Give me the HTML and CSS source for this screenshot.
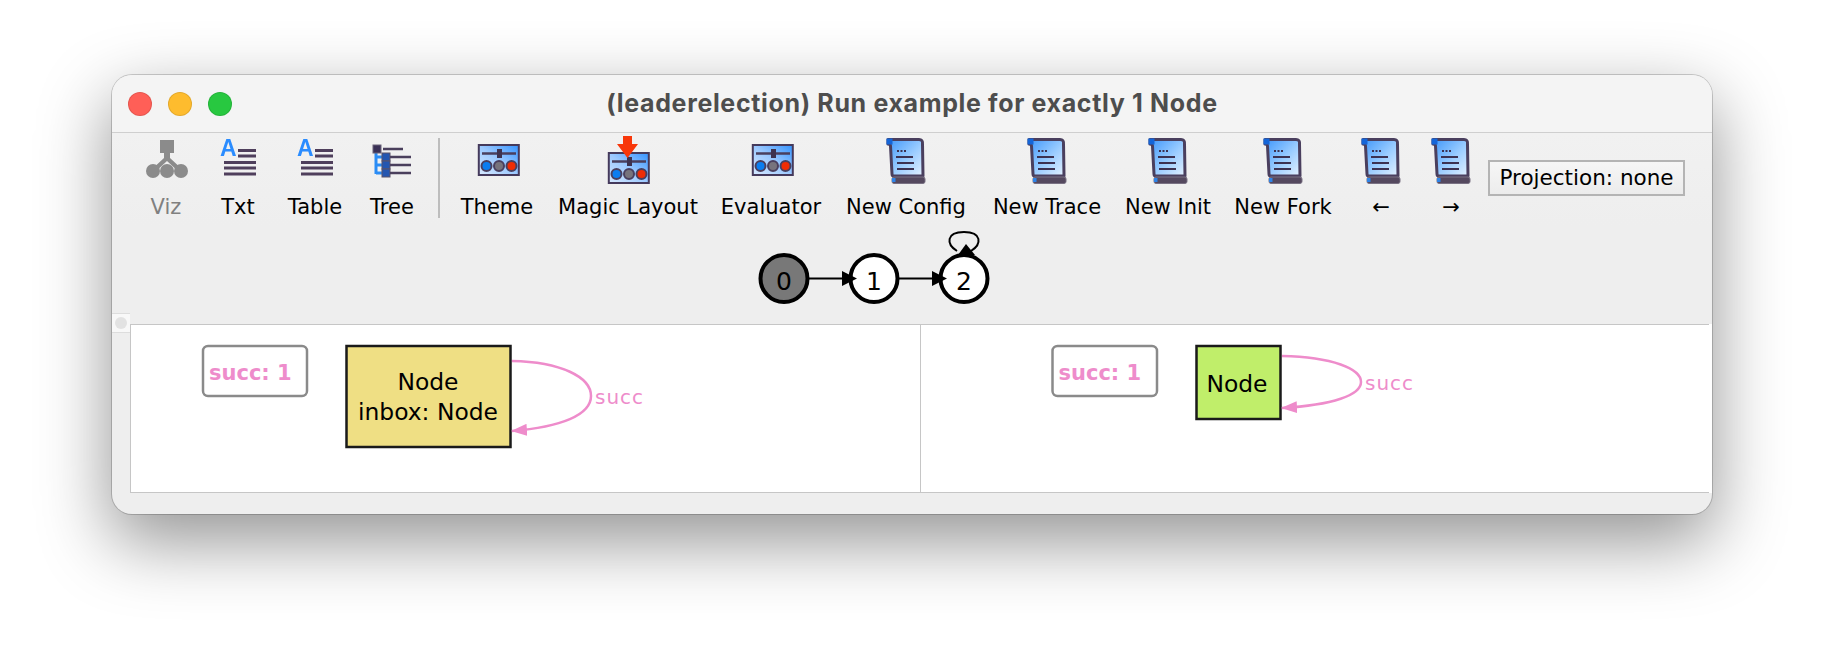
FILE: index.html
```html
<!DOCTYPE html>
<html lang="en">
<head>
<meta charset="utf-8">
<title>Run example</title>
<link rel="stylesheet" href="styles.css">
</head>
<body>
<svg class="defs" width="0" height="0" aria-hidden="true">
  <defs>
    <linearGradient id="sg" x1="0" y1="0" x2="1" y2="1"><stop offset="0" stop-color="#3f97fb"/><stop offset=".55" stop-color="#9ccdff"/><stop offset="1" stop-color="#e4f1ff"/></linearGradient>
    <linearGradient id="tg" x1="0" y1="1" x2="1" y2="0"><stop offset="0" stop-color="#d8e9ff"/><stop offset=".5" stop-color="#9cc9ff"/><stop offset="1" stop-color="#3393ff"/></linearGradient>
    <symbol id="scroll" viewBox="0 0 42 50">
      <path d="M3 3.500H34Q38 3.500 37.500 8L38 40H9Q7 40 7 38L5.500 10Q5.500 8 3 8Z" fill="url(#sg)" stroke="#4a3f5e" stroke-width="3" stroke-linejoin="round"/>
      <rect x="1.500" y="2.500" width="6" height="6" fill="#1465d8"/>
      <path d="M12 15h2M15.500 15h2M19 15h2" stroke="#3c3252" stroke-width="2"/>
      <path d="M11 21H28M12 27H29M12 33H29" stroke="#3c3252" stroke-width="2.200"/>
      <rect x="7" y="41" width="33" height="6.500" rx="2" fill="#55495f" stroke="#7a7284" stroke-width="1"/>
      <rect x="7" y="42" width="3.500" height="4" fill="#2f84e8"/>
    </symbol>
    <symbol id="slider" viewBox="0 0 44 32">
      <rect x="2.800" y="1" width="40" height="30" fill="url(#tg)" stroke="#453a5c" stroke-width="2"/>
      <path d="M6 9.500H40" stroke="#4a3f5e" stroke-width="2.400"/>
      <rect x="21" y="5" width="5" height="9" fill="#3e3350"/>
      <circle cx="10.500" cy="22" r="5" fill="#0b7df0" stroke="#4a3f5e" stroke-width="2"/>
      <circle cx="23" cy="22" r="5" fill="#77737c" stroke="#4a3f5e" stroke-width="2"/>
      <circle cx="35.500" cy="22" r="5" fill="#ef2d05" stroke="#4a3f5e" stroke-width="2"/>
    </symbol>
    <symbol id="textlines" viewBox="0 0 40 50">
      <text class="icon-a" x="2" y="20">A</text>
      <path d="M20 14.500H38M20 20H38M6 26.500H38M6 32H38M6 38H38" stroke="#4f3f5c" stroke-width="3"/>
    </symbol>
  </defs>
</svg>

<main class="window">
  <header class="titlebar">
    <div class="lights">
      <span class="light light-red"></span>
      <span class="light light-yellow"></span>
      <span class="light light-green"></span>
    </div>
    <h1 class="title">(leaderelection) Run example for exactly 1 Node</h1>
  </header>

  <nav class="toolbar">
    <div class="tool">
      <svg class="icon" width="46" height="50" viewBox="0 0 46 50">
        <g fill="#8b8b8b"><rect x="17" y="4" width="14" height="13"/><path d="M21 16h6v6l14 13-3 3-14-13-14 13-3-3 14-13z"/><circle cx="10" cy="35" r="7"/><circle cx="24" cy="35" r="7"/><circle cx="38" cy="35" r="7"/></g>
      </svg>
      <span class="tool-label tool-label-off">Viz</span>
    </div>
    <div class="tool">
      <svg class="icon" width="40" height="50"><use href="#textlines" width="40" height="50"/></svg>
      <span class="tool-label">Txt</span>
    </div>
    <div class="tool">
      <svg class="icon" width="40" height="50"><use href="#textlines" width="40" height="50"/></svg>
      <span class="tool-label">Table</span>
    </div>
    <div class="tool">
      <svg class="icon" width="42" height="50" viewBox="0 0 42 50">
        <path d="M5 16V38M5 21H12M5 29H12M5 37H12" stroke="#2a8cf5" stroke-width="3" fill="none"/>
        <rect x="2" y="9" width="8" height="8" fill="#3a3056" stroke="#6a6278"/>
        <rect x="11" y="17" width="8" height="8" fill="#2456b0" stroke="#5a5268"/>
        <rect x="11" y="25" width="8" height="8" fill="#2456b0" stroke="#5a5268"/>
        <rect x="11" y="33" width="8" height="8" fill="#2456b0" stroke="#5a5268"/>
        <path d="M12 13H32M19 21H40M19 29H40M19 37H40" stroke="#4a3f5c" stroke-width="2.500"/>
      </svg>
      <span class="tool-label">Tree</span>
    </div>
    <div class="separator"></div>
    <div class="tool">
      <svg class="icon" width="44" height="50"><use href="#slider" x="1" y="8" width="44" height="32"/></svg>
      <span class="tool-label">Theme</span>
    </div>
    <div class="tool">
      <svg class="icon" width="44" height="50" viewBox="0 0 44 50">
        <use href="#slider" y="16" width="44" height="32"/>
        <path d="M17 0h9v8h6L21.500 22 11 8h6z" fill="#f8370a"/>
      </svg>
      <span class="tool-label">Magic Layout</span>
    </div>
    <div class="tool">
      <svg class="icon" width="44" height="50"><use href="#slider" x="1" y="8" width="44" height="32"/></svg>
      <span class="tool-label">Evaluator</span>
    </div>
    <div class="tool">
      <svg class="icon" width="42" height="50"><use href="#scroll" width="42" height="50"/></svg>
      <span class="tool-label">New Config</span>
    </div>
    <div class="tool">
      <svg class="icon" width="42" height="50"><use href="#scroll" width="42" height="50"/></svg>
      <span class="tool-label">New Trace</span>
    </div>
    <div class="tool">
      <svg class="icon" width="42" height="50"><use href="#scroll" width="42" height="50"/></svg>
      <span class="tool-label">New Init</span>
    </div>
    <div class="tool">
      <svg class="icon" width="42" height="50"><use href="#scroll" width="42" height="50"/></svg>
      <span class="tool-label">New Fork</span>
    </div>
    <div class="tool">
      <svg class="icon" width="42" height="50"><use href="#scroll" width="42" height="50"/></svg>
      <span class="tool-label">←</span>
    </div>
    <div class="tool">
      <svg class="icon" width="42" height="50"><use href="#scroll" width="42" height="50"/></svg>
      <span class="tool-label">→</span>
    </div>
    <div class="projection">Projection: none</div>
  </nav>

  <svg class="trace" width="240" height="84" viewBox="0 0 240 84">
    <circle class="state state-current" cx="28" cy="54.500" r="23.500"/>
    <circle class="state" cx="118" cy="54.500" r="23.500"/>
    <circle class="state" cx="208" cy="54.500" r="23.500"/>
    <path d="M52 54.500H88M142 54.500H178" stroke="#000" stroke-width="2"/>
    <path d="M86 47L101 54.500L86 62ZM176 47L191 54.500L176 62Z" fill="#000"/>
    <path d="M201 27C190 20 190 8 208 8C226 8 226 20 215 27" fill="none" stroke="#000" stroke-width="2"/>
    <path d="M210 20L219 31H202Z" fill="#000"/>
    <text class="state-num" x="28" y="66">0</text>
    <text class="state-num" x="118" y="66">1</text>
    <text class="state-num" x="208" y="66">2</text>
  </svg>

  <section class="split">
    <span class="knob"></span>
    <div class="pane pane-left">
      <svg class="graph" width="788" height="166" viewBox="0 0 788 166">
        <defs>
          <marker id="pk" markerWidth="16" markerHeight="12" refX="15" refY="6" orient="auto" markerUnits="userSpaceOnUse"><path d="M0 6L16 0V12Z" transform="rotate(180 8 6)" fill="#ee8ccb"/></marker>
        </defs>
        <rect class="badge" x="72" y="21" width="104" height="50" rx="5"/>
        <text class="badge-text" x="78" y="55">succ: 1</text>
        <rect class="node node-yellow" x="215.500" y="21" width="164" height="101"/>
        <text class="node-text" x="297" y="65">Node</text>
        <text class="node-text" x="297" y="95">inbox: Node</text>
        <path class="edge" d="M381 36C430 37 460 52 460 71C460 90 430 102 381 106" marker-end="url(#pk)"/>
        <text class="edge-text" x="464" y="79">succ</text>
      </svg>
    </div>
    <div class="pane pane-right">
      <svg class="graph" width="780" height="166" viewBox="0 0 780 166">
        <rect class="badge" x="131.500" y="21" width="104.500" height="50" rx="5"/>
        <text class="badge-text" x="137.500" y="55">succ: 1</text>
        <rect class="node node-green" x="275.500" y="21" width="84" height="73"/>
        <text class="node-text" x="316" y="67">Node</text>
        <path class="edge" d="M361 31C412 32 440 44 440 57C440 70 412 80 361 83" marker-end="url(#pk)"/>
        <text class="edge-text" x="444" y="65">succ</text>
      </svg>
    </div>
  </section>
</main>
</body>
</html>
```

FILE: styles.css
```css
* { box-sizing: border-box; }

html, body {
  margin: 0;
  height: 100%;
  background: #fff;
  overflow: hidden;
}

body {
  padding: 75px 112px 0;
  font-family: "DejaVu Sans", sans-serif;
}

.defs { display: block; height: 0; }

.window {
  width: 1600px;
  height: 439px;
  display: flex;
  flex-direction: column;
  background: #eee;
  border-radius: 20px;
  overflow: hidden;
  box-shadow: 0 0 0 1px rgba(0,0,0,.18), 0 26px 70px 2px rgba(0,0,0,.42);
  position: relative;
}

.titlebar {
  height: 58px;
  flex: none;
  display: flex;
  align-items: center;
  justify-content: center;
  background: #f4f4f4;
  border-bottom: 1px solid #cfcfcf;
  position: relative;
}

.lights {
  position: absolute;
  left: 16px;
  top: 17px;
  display: flex;
  gap: 16px;
}

.light {
  width: 24px;
  height: 24px;
  border-radius: 50%;
  border: 1px solid rgba(0,0,0,.1);
}
.light-red { background: #ff5f57; }
.light-yellow { background: #febc2e; }
.light-green { background: #28c840; }

.title {
  margin: 0;
  font: 700 25px/1 Inter, sans-serif;
  letter-spacing: .65px;
  color: #4d4d4d;
}

.toolbar {
  height: 93px;
  flex: none;
  padding: 3px 0 0 18px;
  display: grid;
  grid-template-columns: 72px 72px 82px 72px 22px 94px 168px 118px 152px 130px 112px 118px 78px 62px 203px;
  align-items: start;
  background: linear-gradient(#f1f1f1, #eee);
}

.tool {
  display: flex;
  flex-direction: column;
  align-items: center;
}

.icon {
  display: block;
  overflow: visible;
  filter: blur(.4px);
}

.icon-a {
  font: 700 23px "Liberation Sans", sans-serif;
  fill: #2a8cff;
}

.tool-label {
  margin-top: 9px;
  font-size: 21px;
  line-height: 24px;
  color: #000;
  white-space: nowrap;
}
.tool-label-off { color: #808080; }

.separator {
  width: 2px;
  height: 80px;
  margin: 2px 0 0 10px;
  background: #bdbdbd;
}

.projection {
  margin: 24px 0 0 6px;
  width: 197px;
  height: 36px;
  border: 2px solid #b4b4b4;
  background: linear-gradient(#f6f6f6, #ececec);
  font-size: 21.500px;
  line-height: 32px;
  text-align: center;
  white-space: nowrap;
}

.trace {
  display: block;
  flex: none;
  margin: -2px 0 0 644px;
}

.state { fill: #fff; stroke: #000; stroke-width: 4; }
.state-current { fill: #787878; }
.state-num {
  font-size: 25px;
  text-anchor: middle;
  fill: #000;
}

.split {
  flex: none;
  height: 169px;
  margin: 16px 0 0 18px;
  display: flex;
  position: relative;
  background: #fff;
}

.knob {
  position: absolute;
  left: -18px;
  top: -11px;
  width: 18px;
  height: 20px;
  background: #f8f8f8;
  border-top: 1px solid #ddd;
  border-bottom: 1px solid #ddd;
}
.knob::after {
  content: "";
  position: absolute;
  left: 3px;
  top: 3px;
  width: 12px;
  height: 12px;
  border-radius: 50%;
  background: #e2e2e2;
}

.pane {
  height: 100%;
  background: #fff;
  border-top: 1px solid #c6c6c6;
  border-bottom: 1px solid #c6c6c6;
}
.pane-left {
  width: 791px;
  flex: none;
  border-left: 1px solid #c6c6c6;
  border-right: 1px solid #c6c6c6;
}
.pane-right { flex: 1; margin-right: 3px; }

.graph { display: block; }

.badge { fill: #fff; stroke: #8a8a8a; stroke-width: 2.500; }
.badge-text {
  font-size: 21px;
  font-weight: 700;
  fill: #ee8ccb;
}
.node { stroke: #1a1a1a; stroke-width: 2.500; }
.node-yellow { fill: #efdf84; }
.node-green { fill: #c0ee6a; }
.node-text {
  font-size: 23.400px;
  text-anchor: middle;
  fill: #000;
}
.edge { fill: none; stroke: #ee8ccb; stroke-width: 2.500; }
.edge-text {
  font-size: 20px;
  letter-spacing: 1px;
  fill: #ee8ccb;
}
```
